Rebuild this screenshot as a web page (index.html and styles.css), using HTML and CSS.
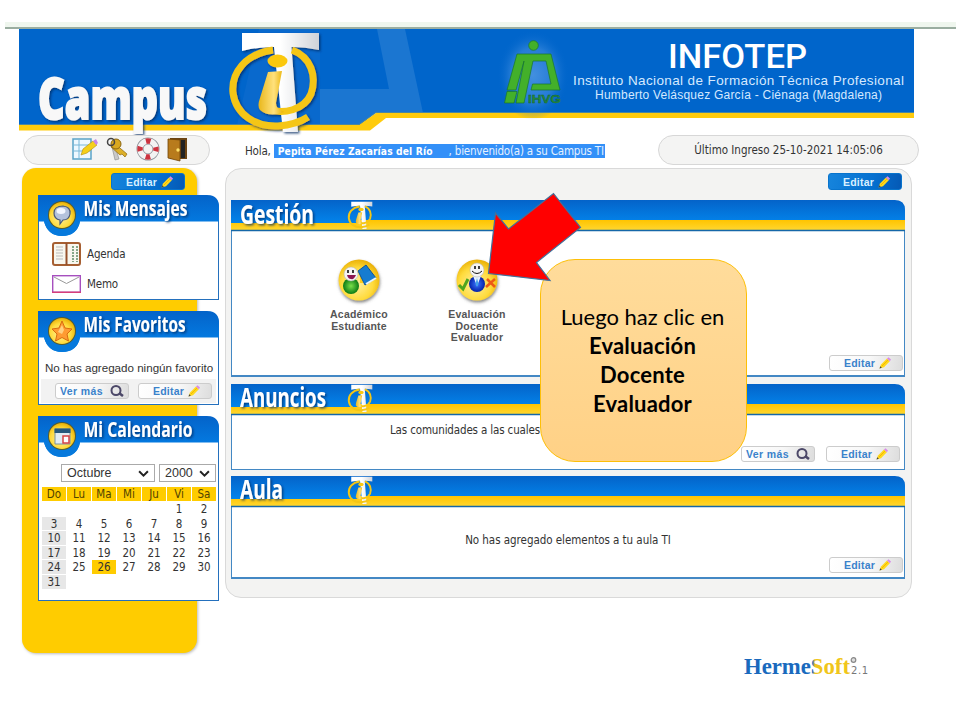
FILE: index.html
```html
<!DOCTYPE html>
<html lang="es">
<head>
<meta charset="utf-8">
<title>Campus TI</title>
<link rel="stylesheet" href="styles.css">
</head>
<body>
<svg class="defs" width="0" height="0">
  <defs>
    <linearGradient id="blue" x1="0" y1="0" x2="0" y2="1"><stop offset="0" stop-color="#0463c9"/><stop offset="1" stop-color="#0385ec"/></linearGradient>
    <linearGradient id="gold" x1="0" y1="0" x2="0" y2="1"><stop offset="0" stop-color="#ffc400"/><stop offset="1" stop-color="#ffd62e"/></linearGradient>
    <linearGradient id="steel" x1="0" y1="0" x2="1" y2="0"><stop offset="0" stop-color="#fff"/><stop offset=".5" stop-color="#fff"/><stop offset="1" stop-color="#cfd2d8"/></linearGradient>
    <linearGradient id="istem" x1="0" y1="0" x2="1" y2="0"><stop offset="0" stop-color="#e9b71b"/><stop offset=".6" stop-color="#ffe17c"/><stop offset="1" stop-color="#e8b000"/></linearGradient>
    <radialGradient id="coin" cx=".45" cy=".6" r=".6"><stop offset="0" stop-color="#fff0a0"/><stop offset=".65" stop-color="#ffdb3c"/><stop offset="1" stop-color="#eab106"/></radialGradient>
    <radialGradient id="green" cx=".5" cy=".5" r=".5"><stop offset="0" stop-color="#7be04a"/><stop offset="1" stop-color="#0a7a14"/></radialGradient>
    <radialGradient id="suit" cx=".5" cy=".5" r=".5"><stop offset="0" stop-color="#3a74ff"/><stop offset="1" stop-color="#0522a8"/></radialGradient>
    <radialGradient id="glow"><stop offset="0" stop-color="#4a94e2" stop-opacity=".9"/><stop offset=".6" stop-color="#3f8cde" stop-opacity=".6"/><stop offset="1" stop-color="#0065cb" stop-opacity="0"/></radialGradient>
    <filter id="soft" x="-20%" y="-20%" width="150%" height="150%"><feDropShadow dx="1.5" dy="1.5" stdDeviation="1" flood-color="#002a60" flood-opacity=".75"/></filter>
    <filter id="drop" x="-20%" y="-20%" width="150%" height="160%"><feDropShadow dx="0.5" dy="2" stdDeviation="1.4" flood-color="#555" flood-opacity=".7"/></filter>
  </defs>
  <symbol id="ti" viewBox="226 30 96 106">
    <path d="M242 33H319V50Q305 47 291.500 47L298 132H283L274 47Q257 47 242 51Z" fill="url(#steel)"/>
    <path d="M273 50C245 54 231 73 233 93C236 115 256 127 278 126C292 125 302 121 308 117" fill="none" stroke="#f5c614" stroke-width="7"/>
    <path d="M292 50C311 57 317 76 311 94C304 110 284 115 266 109" fill="none" stroke="#f5c614" stroke-width="7"/>
    <path d="M268 72L282 71L276 103Q276 109 284 112Q269 118 260 110Q257 106 260 98Z" fill="url(#istem)"/>
    <ellipse cx="277.500" cy="61" rx="10" ry="6.500" fill="#fbc810"/>
  </symbol>
  <symbol id="pencil" viewBox="0 0 12 12">
    <path d="M.5 11.500L2 7.500L8 1.500L10.800 4.300L5 10.300Z" fill="#ffd91c"/><path d="M2.800 9.200L9 3" stroke="#f6b800" stroke-width="1"/>
    <path d="M8 1.500L9.500 .2L12 2.600L10.800 4.300Z" fill="#d88be8"/><path d="M.5 11.500L1.300 9.300L2.800 10.700Z" fill="#444"/>
  </symbol>
  <symbol id="lens" viewBox="0 0 14 12">
    <circle cx="6" cy="5.500" r="4.500" fill="none" stroke="#4c4868" stroke-width="2"/><path d="M9 8L13 11" stroke="#4c4868" stroke-width="2.600"/>
  </symbol>
  <symbol id="bar" viewBox="0 0 674 32">
    <path d="M0 0H664Q674 0 674 10V21H130V23.500H0Z" fill="url(#blue)"/>
    <path d="M0 23L128 23L128 20H674V30H0Z" fill="url(#gold)"/>
    <path d="M0 30.500H674" stroke="#1567a8" stroke-width="1.500"/>
  </symbol>
  <symbol id="cap" viewBox="0 0 181 42">
    <path d="M0 0H169Q181 0 181 12V26.500H42Q39 41 24 41Q10 41 6 26.500H0Z" fill="url(#blue)"/>
    <path d="M42 26.500Q39 41 24 41Q10 41 6 26.500Z" fill="#0679dc"/>
    <circle cx="24" cy="20" r="14" fill="#555c30"/><circle cx="24" cy="20" r="13" fill="url(#coin)"/>
  </symbol>
</svg>

<main class="page">
  <div class="browser-edge"></div>
  <header>
    <svg class="banner" viewBox="19 29 895 106">
      <path d="M19 29H914V113H375L360 125H19Z" fill="#0065cb"/>
      <path d="M259 29H320V125H237Z" fill="#0f6dcf" opacity=".6"/>
      <path d="M377 29H405L423 113H375L360 125H320V89H389Z" fill="#1b76d1"/>
      <path d="M19 125H359L376 113H914V118H386L370 130.500H19Z" fill="#ffcb0d"/>
      <path d="M19 124.500H359L376 112.500H914" fill="none" stroke="#4b86a0"/>
      <text class="campus" x="38" y="118.500" textLength="169" lengthAdjust="spacingAndGlyphs" filter="url(#soft)">Campus</text>
      <use href="#ti" x="226" y="30" width="96" height="106" filter="url(#soft)"/>
      <ellipse cx="533" cy="75" rx="36" ry="45" fill="url(#glow)"/>
      <g fill="#43b02a" stroke="#19772c" stroke-width=".7">
        <circle cx="533.500" cy="45.500" r="4.800"/>
        <path d="M517 54H551L560 90H531L532.500 84H551L546 61H533L524 103H516L524 61L516 90H507Z" fill-rule="evenodd"/>
        <path d="M507 91.500H517L514 103H504.500Z"/>
      </g>
      <text class="ihvg" x="528" y="103" textLength="33" lengthAdjust="spacingAndGlyphs">IHVG</text>
      <text class="infotep" x="668" y="68" textLength="139" lengthAdjust="spacingAndGlyphs">INFOTEP</text>
      <text class="inst" x="573" y="85" textLength="331">Instituto Nacional de Formación Técnica Profesional</text>
      <text class="inst small" x="595" y="99" textLength="287">Humberto Velásquez García - Ciénaga (Magdalena)</text>
    </svg>
  </header>

  <div class="toolbar">
    <div class="pill tools">
      <svg viewBox="0 0 26 24" width="26" height="24"><path d="M1 2H19V22H1Z" fill="#eef8ff" stroke="#5aa2c8" stroke-width="1.500"/><path d="M1 8H19M1 14H19M7 2V22" stroke="#79b8d8"/><path d="M9 18L11 12L21 4L25 8L15 16Z" fill="#f5cf19" stroke="#b08c10" stroke-width=".6"/><path d="M21 4L24 2L26 6L24 8Z" fill="#c887e8"/></svg>
      <svg viewBox="0 0 24 24" width="24" height="24"><path d="M10 9L14 22L10 23L7 10Z" fill="#c9c9c9" stroke="#888" stroke-width=".6"/><path d="M9 6L22 17L20 20L17 17L15 18L6 10Z" fill="#ddb029" stroke="#8b6610" stroke-width=".7"/><circle cx="11" cy="7" r="5" fill="#d9a81f" stroke="#8b6610"/><circle cx="6" cy="5" r="3.500" fill="none" stroke="#444" stroke-width="1.500"/></svg>
      <svg viewBox="0 0 24 24" width="24" height="24"><circle cx="12" cy="12" r="8" fill="none" stroke="#8d9299" stroke-width="7"/><circle cx="12" cy="12" r="8" fill="none" stroke="#f3f3f3" stroke-width="5.500"/><circle cx="12" cy="12" r="8" fill="none" stroke="#cc3440" stroke-width="5.500" stroke-dasharray="4.600 7.966" stroke-dashoffset="2.300"/></svg>
      <svg viewBox="0 0 22 24" width="22" height="24"><path d="M3 1H20V22H3Z" fill="#6c4413"/><path d="M14 3H18V21H14Z" fill="#222"/><path d="M1 2L13 3V24L1 21Z" fill="#b87b1c" stroke="#704408" stroke-width=".8"/><circle cx="11" cy="13" r="1.700" fill="#ffe26a"/></svg>
    </div>
    <div class="hello">Hola, <span class="sel"><b>Pepita Pérez Zacarías del Río</b><span class="welcome">, bienvenido(a) a su Campus TI</span></span></div>
    <div class="pill last">Último Ingreso 25-10-2021 14:05:06</div>
  </div>

  <div class="columns">
    <aside class="sidebar">
      <div class="btn solid"><span>Editar</span><svg class="pen"><use href="#pencil"/></svg></div>
      <section class="box messages">
        <svg class="cap" viewBox="0 0 181 42"><use href="#cap"/>
          <path d="M16 18Q16 11 25 11Q33 12 32 19Q31 25 25 25L22 29V25Q16 24 16 18Z" fill="#b4c2dc" stroke="#485878" stroke-width="1.200"/><ellipse cx="23" cy="16" rx="4.500" ry="3" fill="#f2f6ff"/>
          <text x="45.500" y="21" textLength="104" lengthAdjust="spacingAndGlyphs">Mis Mensajes</text></svg>
        <div class="link"><svg width="29" height="24" viewBox="0 0 29 24"><rect x="1" y="1" width="27" height="22" rx="2" fill="#f8f7ef" stroke="#a65f32" stroke-width="2"/><path d="M14.500 1V23" stroke="#96502a" stroke-width="2"/><path d="M4 5H11M4 8H11M4 11H11M4 14H11M4 17H11" stroke="#bbb"/><path d="M21 4V20M25 4V20" stroke="#85a788" stroke-width="2" stroke-dasharray="2 1"/></svg>Agenda</div>
        <div class="link"><svg width="29" height="18" viewBox="0 0 29 18"><rect x=".7" y=".7" width="27.600" height="16.600" fill="#fff" stroke="#a64fbe" stroke-width="1.400"/><path d="M0 17.300H29" stroke="#d63e79" stroke-width="1.400"/><path d="M2 2L14.500 8.500L27 2" fill="none" stroke="#999"/></svg>Memo</div>
      </section>
      <section class="box favorites">
        <svg class="cap" viewBox="0 0 181 42"><use href="#cap"/>
          <path d="M24 10L27 17L34 18L29 23L30.500 30L24 26.500L17.500 30L19 23L14 18L21 17Z" fill="#ff9b32" stroke="#d86c10"/><path d="M24 14L26 19L24 23L20 21Z" fill="#ffd080"/>
          <text x="45.500" y="21" textLength="102" lengthAdjust="spacingAndGlyphs">Mis Favoritos</text></svg>
        <p>No has agregado ningún favorito</p>
        <div class="actions"><div class="btn more"><span>Ver más</span><svg class="mag"><use href="#lens"/></svg></div><div class="btn"><span>Editar</span><svg class="pen"><use href="#pencil"/></svg></div></div>
      </section>
      <section class="box calendar">
        <svg class="cap" viewBox="0 0 181 42"><use href="#cap"/>
          <path d="M17 13H32V28H17Z" fill="#e3edf2" stroke="#7b9199"/><path d="M16.500 12.500H32.500V17H16.500Z" fill="#27597c"/><rect x="25" y="20" width="6" height="7" fill="#fff" stroke="#d84343" stroke-width="1.500"/>
          <text x="45.500" y="21" textLength="109" lengthAdjust="spacingAndGlyphs">Mi Calendario</text></svg>
        <div class="selects"><div class="select month">Octubre<svg viewBox="0 0 10 6"><path d="M1 1L5 5L9 1"/></svg></div><div class="select year">2000<svg viewBox="0 0 10 6"><path d="M1 1L5 5L9 1"/></svg></div></div>
        <div class="grid">
          <b>Do</b><b>Lu</b><b>Ma</b><b>Mi</b><b>Ju</b><b>Vi</b><b>Sa</b>
          <i></i><i></i><i></i><i></i><i></i><i>1</i><i>2</i>
          <i class="sun">3</i><i>4</i><i>5</i><i>6</i><i>7</i><i>8</i><i>9</i>
          <i class="sun">10</i><i>11</i><i>12</i><i>13</i><i>14</i><i>15</i><i>16</i>
          <i class="sun">17</i><i>18</i><i>19</i><i>20</i><i>21</i><i>22</i><i>23</i>
          <i class="sun">24</i><i>25</i><i class="today">26</i><i>27</i><i>28</i><i>29</i><i>30</i>
          <i class="sun">31</i>
        </div>
      </section>
    </aside>

    <div class="content">
      <div class="btn solid"><span>Editar</span><svg class="pen"><use href="#pencil"/></svg></div>
      <section class="panel gestion">
        <svg class="bar" viewBox="0 0 674 32"><use href="#bar"/><use href="#ti" x="115" y="1" width="28" height="29"/><text x="9" y="23.500" textLength="74" lengthAdjust="spacingAndGlyphs">Gestión</text></svg>
        <div class="apps">
          <div class="app"><svg viewBox="0 0 48 48"><circle cx="24" cy="23" r="20.500" fill="url(#coin)" filter="url(#drop)"/><ellipse cx="16" cy="29" rx="8" ry="8" fill="url(#green)"/><path d="M25 13H28V26H25Z" fill="#ffcb18"/><path d="M23 14L31 8L41 21L30 28Z" fill="#167cd0" stroke="#0b559d"/><path d="M31 27L41 21" stroke="#e7f4ff" stroke-width="2"/><circle cx="16" cy="17" r="7" fill="#f4f4f4" stroke="#aaa" stroke-width=".5"/><path d="M13 13V16M18 13V16" stroke="#111" stroke-width="1.600"/><path d="M12 18H21Q19 23 16 22Q13 22 12 18Z" fill="#8b1552"/></svg><span>Académico<br>Estudiante</span></div>
          <div class="app"><svg viewBox="0 0 48 48"><circle cx="24" cy="23" r="20.500" fill="url(#coin)" filter="url(#drop)"/><path d="M6 28L10 32L15 22" fill="none" stroke="#4fa51e" stroke-width="3"/><ellipse cx="24" cy="27" rx="8" ry="8" fill="url(#suit)"/><path d="M20 19L24 29L28 19Z" fill="#e6f3ff"/><path d="M24 21L25.500 27L24 30L22.500 27Z" fill="#42a2e9"/><circle cx="24" cy="13" r="7" fill="#f5f5f5" stroke="#aaa" stroke-width=".5"/><path d="M22 9V12M26 9V12" stroke="#111" stroke-width="1.600"/><path d="M19 14Q24 19 29 14" fill="none" stroke="#111"/><path d="M34 22L42 30M42 22L33 30" stroke="#ee5a16" stroke-width="2.500"/></svg><span>Evaluación<br>Docente<br>Evaluador</span></div>
        </div>
        <div class="actions"><div class="btn"><span>Editar</span><svg class="pen"><use href="#pencil"/></svg></div></div>
      </section>
      <section class="panel anuncios">
        <svg class="bar" viewBox="0 0 674 32"><use href="#bar"/><use href="#ti" x="115" y="0" width="28" height="29"/><text x="9" y="22.500" textLength="86" lengthAdjust="spacingAndGlyphs">Anuncios</text></svg>
        <p>Las comunidades a las cuales</p>
        <div class="actions"><div class="btn more"><span>Ver más</span><svg class="mag"><use href="#lens"/></svg></div><div class="btn"><span>Editar</span><svg class="pen"><use href="#pencil"/></svg></div></div>
      </section>
      <section class="panel aula">
        <svg class="bar" viewBox="0 0 674 32"><use href="#bar"/><use href="#ti" x="115" y="0" width="28" height="29"/><text x="9" y="22.500" textLength="43" lengthAdjust="spacingAndGlyphs">Aula</text></svg>
        <p>No has agregado elementos a tu aula TI</p>
        <div class="actions"><div class="btn"><span>Editar</span><svg class="pen"><use href="#pencil"/></svg></div></div>
      </section>
    </div>
  </div>

  <footer>
    <svg viewBox="0 0 130 30" width="130" height="30"><defs><linearGradient id="brand" gradientUnits="userSpaceOnUse" x1="0" y1="0" x2="110" y2="0"><stop offset=".66" stop-color="#1b69bd"/><stop offset=".68" stop-color="#f0c51d"/></linearGradient></defs><text class="brand" x="4" y="21" textLength="106" lengthAdjust="spacingAndGlyphs" fill="url(#brand)">HermeSoft</text><circle cx="113.500" cy="7" r="2.300" fill="#ddd" stroke="#888" stroke-width="1.200"/><text class="version" x="111" y="20.500" textLength="17">2.1</text></svg>
  </footer>

  <div class="callout"><span>Luego haz clic en</span><b>Evaluación</b><b>Docente</b><b>Evaluador</b></div>
  <svg class="arrow" viewBox="480 185 110 100" width="110" height="100"><path d="M553.500 193.500L580.500 227.500L536.500 262.500L550 280.500L488.500 273.500L495.500 213L508.500 229Z" fill="#f00" stroke="#41719c" stroke-width="1.200"/></svg>
</main>
</body>
</html>
```

FILE: styles.css
```css
* { box-sizing: border-box; }
body { margin: 0; background: #fff; color: #333; font: 11.5px/14px "DejaVu Sans Condensed", "DejaVu Sans", sans-serif; font-stretch: condensed; }
p { margin: 0; }
svg { display: block; flex: none; overflow: visible; }
.defs { position: absolute; }
.page { position: relative; width: 960px; height: 720px; padding-top: 22px; overflow: hidden; }
.browser-edge { height: 7px; margin: 0 4px 0 5px; background: #eff6ee; border-bottom: 2px solid #9aada0; }
header { height: 106px; padding-left: 19px; }
.banner { width: 895px; height: 106px; }
.campus { font: 900 56px "Open Sans", sans-serif; fill: #f8f8f8; stroke: #f8f8f8; stroke-width: 2px; }
.ihvg { font: bold 11px "Liberation Sans", sans-serif; fill: #278b3c; stroke: #12652f; stroke-width: .4px; }
.infotep { font: 500 34px Roboto, sans-serif; fill: #fff; }
.inst { font: 13.5px "Liberation Sans", sans-serif; fill: #d5e9ff; }
.inst.small { font-size: 12px; }

.toolbar { display: flex; height: 33px; padding-left: 23px; }
.pill { height: 30px; border: 1.5px solid #d7d7d7; border-radius: 15px; background: #f4f4f3; }
.tools { display: flex; width: 187px; padding: 1px 0 0 48px; gap: 7px; }
.hello { width: 413px; margin-left: 35px; padding-top: 9px; white-space: nowrap; letter-spacing: -.2px; }
.sel { display: inline-block; width: 331px; height: 14px; padding-left: 4px; background: #3390f8; color: #e5f1ff; }
.sel b { font-size: 10.2px; letter-spacing: .13px; color: #fff; }
.welcome { margin-left: 16px; }
.last { width: 261px; padding-top: 7px; text-align: center; }

.columns { display: flex; align-items: flex-start; padding-left: 22px; }
.sidebar { width: 175px; height: 485px; padding: 5px 0 0 16px; background: #fc0; border-radius: 14px; box-shadow: 1px 1px 3px #bbb; }
.btn { display: flex; align-items: center; justify-content: space-between; width: 74px; height: 16px; padding: 0 11px 0 14px; border: 1px solid #ccc; border-radius: 3px; background: linear-gradient(100deg, #fff, #f7f7f7 55%, #ddd); color: #3a82cb; font: bold 10.5px/14px "Liberation Sans", sans-serif; letter-spacing: .2px; white-space: nowrap; }
.btn span { flex: none; }
.btn .pen { width: 12px; height: 12px; }
.btn .mag { width: 14px; height: 12px; }
.btn.more { padding: 0 4px; letter-spacing: .4px; }
.btn.solid { height: 17px; border-color: #0874cd; background: linear-gradient(100deg, #1684dc, #0570d0 60%, #0559b5); color: #d9f0ff; }
.sidebar > .btn { margin-left: 73px; }
.box { width: 181px; border: 1px solid #2470bd; border-top: 0; border-radius: 0 12px 0 0; background: #fff; }
.cap { width: 181px; height: 42px; margin-left: -1px; }
.cap text { font: bold 20.5px "Open Sans", sans-serif; fill: #fff; filter: url(#soft); }
.messages { height: 105px; margin-top: 5px; }
.link { display: flex; align-items: center; gap: 6px; height: 31px; padding-left: 13px; margin-top: 1px; letter-spacing: -.2px; }
.link + .link { margin-top: -1px; }
.favorites { height: 94px; margin-top: 11px; }
.favorites p { height: 25px; padding: 8px 0 0 6px; font: 11.6px/14px "Liberation Sans", sans-serif; white-space: nowrap; }
.favorites .actions { display: flex; gap: 9px; height: 24px; margin: 1px 2px 0; padding: 4px 0 0 14px; background: #f2f2f2; }
.calendar { height: 185px; margin-top: 11px; }
.selects { display: flex; gap: 4px; margin: 6px 0 0 22px; }
.select { display: flex; align-items: center; justify-content: space-between; height: 18px; padding: 0 5px; border: 1px solid #aaa; font: 12.5px "Liberation Sans", sans-serif; }
.select svg { width: 11px; height: 7px; fill: none; stroke: #222; stroke-width: 1.8; }
.month { width: 94px; }
.year { width: 57px; }
.grid { display: grid; grid-template-columns: repeat(7, 24px); grid-template-rows: 14px; grid-auto-rows: 13.600px; gap: 1px; margin: 5px 0 0 3px; text-align: center; }
.grid b, .grid i { font-weight: normal; font-style: normal; line-height: 15px; }
.grid b { background: #fc0; color: #514300; }
.grid .sun { background: #e7e7e7; }
.grid .today { background: #fc0; }

.content { width: 687px; height: 430px; margin-left: 28px; padding: 4px 0 0 5px; border: 1.5px solid #d9d9d9; border-radius: 16px; background: #f3f3f2; }
.content > .btn { margin-left: 597px; }
.panel { width: 674px; border: 1px solid #4388c4; border-top: 0; border-radius: 0 10px 0 0; background: #fff; }
.bar { width: 674px; height: 32px; margin-left: -1px; }
.bar text { font: bold 26px "Open Sans", sans-serif; fill: #fff; filter: url(#soft); }
.panel .actions { display: flex; justify-content: flex-end; gap: 11px; }
.gestion { height: 177px; margin-top: 10px; border-bottom-width: 2px; }
.apps { display: flex; gap: 18px; height: 123px; padding: 25px 0 0 77px; }
.app { display: flex; flex-direction: column; align-items: center; width: 100px; font: bold 10.5px/11.7px "Liberation Sans", sans-serif; text-align: center; letter-spacing: .2px; color: #555; }
.app svg { width: 48px; height: 48px; margin-bottom: 4px; }
.gestion .actions { padding-right: 1px; }
.anuncios { height: 86px; margin-top: 7px; }
.anuncios p { height: 30px; padding: 7px 0 0 158px; letter-spacing: -.15px; }
.anuncios .actions { padding-right: 4px; }
.aula { height: 103px; margin-top: 6px; border-bottom-width: 2px; }
.aula p { height: 49px; padding-top: 25px; text-align: center; letter-spacing: -.04px; }
.aula .actions { padding-right: 1px; }

footer { margin-left: 740px; }
.brand { font: bold 23px "Liberation Serif", serif; }
.version { font: 10px "DejaVu Sans", sans-serif; fill: #777; }

.callout { position: absolute; left: 540px; top: 259px; width: 207px; height: 203px; padding: 42px 2px 0 0; border: 1px solid #fdbf08; border-radius: 35px; background: linear-gradient(#ffdc9b, #ffd186); color: #000; font: 22px/29px Lato, sans-serif; display: flex; flex-direction: column; align-items: center; white-space: nowrap; }
.callout b { letter-spacing: .2px; }
.arrow { position: absolute; left: 480px; top: 185px; }
```
